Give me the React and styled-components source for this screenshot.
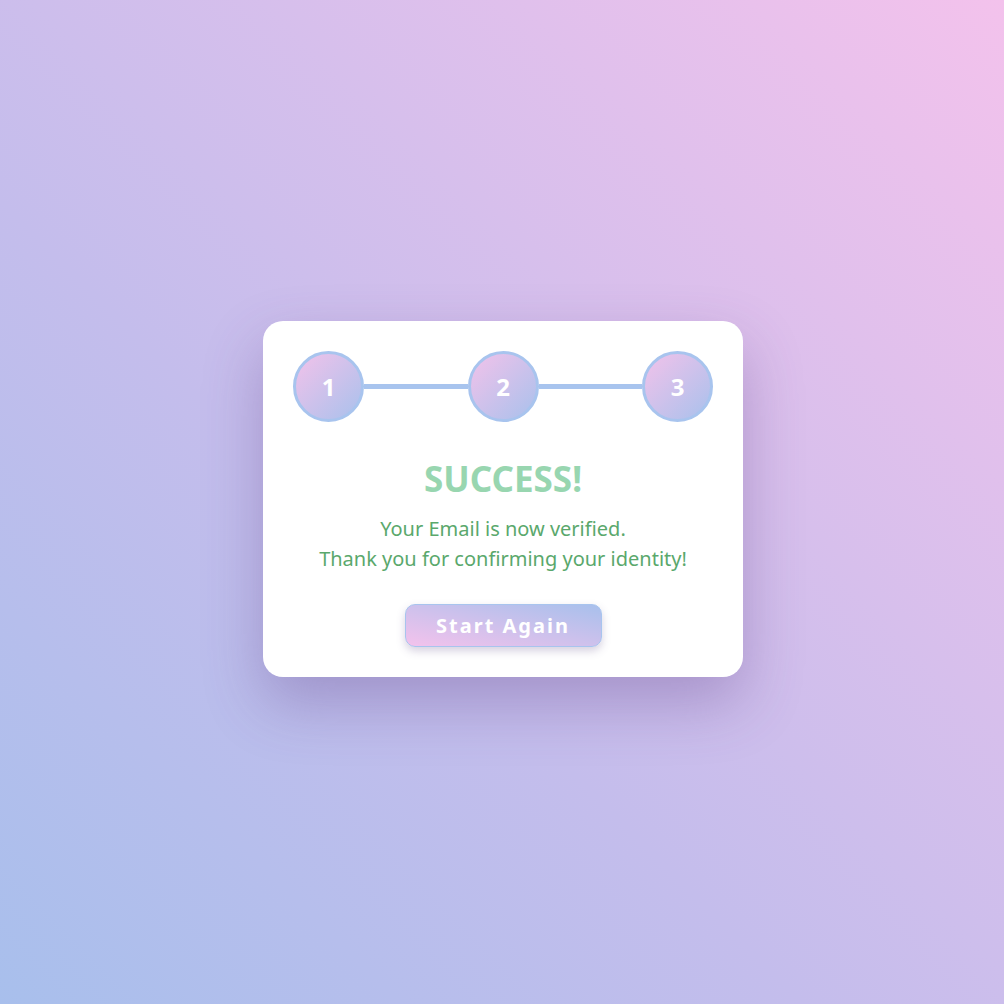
import React from "react";
import styled, { createGlobalStyle } from "styled-components";

const GlobalStyle = createGlobalStyle`
  html, body {
    margin: 0;
    padding: 0;
  }
  body {
    font-family: "Noto Sans", "Open Sans", sans-serif;
  }
`;

const steps = ["1", "2", "3"];

export default function App() {
  return (
    <Page>
      <GlobalStyle />
      <Card>
        <Stepper>
          {steps.map((s, i) => (
            <React.Fragment key={s}>
              {i > 0 && <Connector />}
              <StepCircle>{s}</StepCircle>
            </React.Fragment>
          ))}
        </Stepper>
        <Title>SUCCESS!</Title>
        <Message>
          Your Email is now verified.
          <br />
          Thank you for confirming your identity!
        </Message>
        <RestartButton>Start Again</RestartButton>
      </Card>
    </Page>
  );
}

const Page = styled.div`
  width: 100vw;
  height: 100vh;
  display: flex;
  align-items: center;
  justify-content: center;
  background: linear-gradient(to top right, #a8bfec 0%, #c4bdec 40%, #f3c2ec 100%);
`;

const Card = styled.div`
  width: 480px;
  box-sizing: border-box;
  padding: 30px;
  background: #ffffff;
  border-radius: 20px;
  box-shadow: 0 26px 60px rgba(90, 60, 130, 0.32);
  display: flex;
  flex-direction: column;
  align-items: center;
  margin: -6px 0 0 2px;
`;

const Stepper = styled.div`
  width: 100%;
  display: flex;
  align-items: center;
`;

const StepCircle = styled.div`
  width: 71px;
  height: 71px;
  box-sizing: border-box;
  border-radius: 50%;
  border: 3px solid #a8c4ee;
  background: linear-gradient(135deg, #f2c2ea 0%, #a9c1ec 100%);
  display: flex;
  align-items: center;
  justify-content: center;
  color: #ffffff;
  font-weight: 700;
  font-size: 24px;
  flex-shrink: 0;
`;

const Connector = styled.div`
  flex: 1;
  height: 5px;
  background: #a8c4ee;
`;

const Title = styled.h1`
  margin: 37px 0 0;
  font-size: 35px;
  line-height: 40px;
  font-weight: 700;
  color: #98d6b0;
`;

const Message = styled.p`
  margin: 15px 0 0;
  font-size: 20px;
  line-height: 30px;
  text-align: center;
  color: #5aa86c;
`;

const RestartButton = styled.button`
  margin-top: 30px;
  width: 197px;
  height: 43px;
  border: 1px solid #a8c4ee;
  border-radius: 10px;
  background: linear-gradient(to top right, #f3c2ec 0%, #a8c0ec 100%);
  box-shadow: 0 4px 8px rgba(90, 70, 130, 0.25);
  color: #ffffff;
  font-family: "Noto Sans", "Open Sans", sans-serif;
  font-size: 20px;
  font-weight: 700;
  letter-spacing: 2px;
  cursor: pointer;
`;
